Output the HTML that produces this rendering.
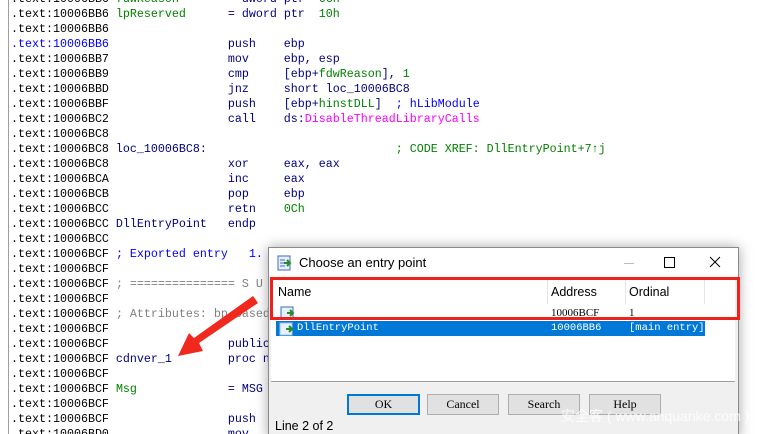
<!DOCTYPE html>
<html><head><meta charset="utf-8"><style>
html,body{margin:0;padding:0;width:775px;height:434px;overflow:hidden;background:#fff;position:relative}
#code{position:absolute;top:0;width:767px;height:434px;border-left:1px solid #a0a0a0;left:8px;overflow:hidden}
.r{position:absolute;left:2px;height:15px;line-height:15px;font-family:"Liberation Mono",monospace;font-size:11.67px;white-space:pre;color:#000080}
.a{color:#000}
.b{color:#0000ff}
.g{color:#008000}
.m{color:#ff00ff}
.gr{color:#808080}
.dlg{position:absolute;left:268px;top:247px;width:469px;height:190px;background:#f0f0f0;border:1px solid #8a8a8a;box-shadow:0 0 12px rgba(0,0,0,.35);font-family:"Liberation Sans","Noto Sans CJK SC",sans-serif}
.title{position:absolute;left:0;top:0;width:469px;height:30px;background:#fff}
.list{position:absolute;left:2px;top:30px;width:464px;height:103px;background:#fff;border-bottom:1px solid #a0a0a0}
.btn{position:absolute;top:146px;width:70px;height:19px;background:#e1e1e1;border:1px solid #adadad;font-family:"Liberation Serif",serif;font-size:12px;text-align:center;line-height:19px}
.sel span{position:absolute;white-space:pre}
</style></head><body>
<div id="code">
<div class="r" style="top:-8px"><span class="a">.text:10006BB6</span> <span class="g">fdwReason</span>       = dword ptr  <span class="g">0Ch</span></div>
<div class="r" style="top:7px"><span class="a">.text:10006BB6</span> <span class="g">lpReserved</span>      = dword ptr  <span class="g">10h</span></div>
<div class="r a" style="top:22px">.text:10006BB6</div>
<div class="r" style="top:37px"><span class="b">.text:10006BB6</span>                 push    ebp</div>
<div class="r" style="top:52px"><span class="a">.text:10006BB7</span>                 mov     ebp, esp</div>
<div class="r" style="top:67px"><span class="a">.text:10006BB9</span>                 cmp     [ebp+<span class="g">fdwReason</span>], <span class="g">1</span></div>
<div class="r" style="top:82px"><span class="a">.text:10006BBD</span>                 jnz     short loc_10006BC8</div>
<div class="r" style="top:97px"><span class="a">.text:10006BBF</span>                 push    [ebp+<span class="g">hinstDLL</span>]  <span class="b">; hLibModule</span></div>
<div class="r" style="top:112px"><span class="a">.text:10006BC2</span>                 call    ds:<span class="m">DisableThreadLibraryCalls</span></div>
<div class="r a" style="top:127px">.text:10006BC8</div>
<div class="r" style="top:142px"><span class="a">.text:10006BC8</span> loc_10006BC8:                           <span class="g">; CODE XREF: DllEntryPoint+7↑j</span></div>
<div class="r" style="top:157px"><span class="a">.text:10006BC8</span>                 xor     eax, eax</div>
<div class="r" style="top:172px"><span class="a">.text:10006BCA</span>                 inc     eax</div>
<div class="r" style="top:187px"><span class="a">.text:10006BCB</span>                 pop     ebp</div>
<div class="r" style="top:202px"><span class="a">.text:10006BCC</span>                 retn    <span class="g">0Ch</span></div>
<div class="r" style="top:217px"><span class="a">.text:10006BCC</span> DllEntryPoint   endp</div>
<div class="r a" style="top:232px">.text:10006BCC</div>
<div class="r" style="top:247px"><span class="a">.text:10006BCF</span> <span class="b">; Exported entry   1. cdnver_1</span></div>
<div class="r a" style="top:262px">.text:10006BCF</div>
<div class="r" style="top:277px"><span class="a">.text:10006BCF</span> <span class="gr">; =============== S U B R O U T I N E</span></div>
<div class="r a" style="top:292px">.text:10006BCF</div>
<div class="r" style="top:307px"><span class="a">.text:10006BCF</span> <span class="gr">; Attributes: bp-based frame</span></div>
<div class="r a" style="top:322px">.text:10006BCF</div>
<div class="r" style="top:337px"><span class="a">.text:10006BCF</span>                 public cdnver_1</div>
<div class="r" style="top:352px"><span class="a">.text:10006BCF</span> cdnver_1        proc near</div>
<div class="r a" style="top:367px">.text:10006BCF</div>
<div class="r" style="top:382px"><span class="a">.text:10006BCF</span> <span class="g">Msg</span>             = MSG ptr -1Ch</div>
<div class="r a" style="top:397px">.text:10006BCF</div>
<div class="r" style="top:412px"><span class="a">.text:10006BCF</span>                 push    ebp</div>
<div class="r" style="top:427px"><span class="a">.text:10006BD0</span>                 mov     ebp, esp</div>
</div>
<svg style="position:absolute;left:0;top:0" width="775" height="434"><polygon points="253,296 258,303 199,343 203,351 178,356 189,333 194,338" fill="#f0281e"/></svg>
<div class="dlg">
 <div class="title">
  <svg style="position:absolute;left:8px;top:7px" width="16" height="16"><rect x="1" y="1" width="12" height="14" fill="#e8f0fb" stroke="#3a6cc0"/><path d="M3 5h5M3 8h5M3 11h5" stroke="#3a6cc0"/><path d="M7 8h5M10 5l3 3-3 3" stroke="#2a8a2a" stroke-width="2" fill="none"/></svg>
  <div style="position:absolute;left:30px;top:7px;font-size:13px">Choose an entry point</div>
  <div style="position:absolute;left:355px;top:15px;width:10px;height:1px;background:#bbb"></div>
  <div style="position:absolute;left:395px;top:9px;width:9px;height:9px;border:1px solid #000"></div>
  <svg style="position:absolute;left:440px;top:8px" width="12" height="12"><path d="M1 1L11 11M11 1L1 11" stroke="#000"/></svg>
 </div>
 <div class="list">
  <div style="position:absolute;left:7px;top:7px;font-size:12.5px">Name</div>
  <div style="position:absolute;left:276px;top:0;width:1px;height:26px;background:#e5e5e5"></div>
  <div style="position:absolute;left:280px;top:7px;font-size:12.5px">Address</div>
  <div style="position:absolute;left:354px;top:0;width:1px;height:26px;background:#e5e5e5"></div>
  <div style="position:absolute;left:358px;top:7px;font-size:12.5px">Ordinal</div>
  <div style="position:absolute;left:433px;top:0;width:1px;height:26px;background:#e5e5e5"></div>
  <svg style="position:absolute;left:9px;top:28px" width="16" height="14"><rect x="1" y="1" width="12" height="12" fill="#e8f0fb" stroke="#3a6cc0"/><path d="M7 7h5M10 4l3 3-3 3" stroke="#2a8a2a" stroke-width="2" fill="none"/></svg>
  <div style="position:absolute;left:280px;top:29px;font-family:'Liberation Serif',serif;font-size:11px">10006BCF</div>
  <div style="position:absolute;left:358px;top:29px;font-family:'Liberation Serif',serif;font-size:11px">1</div>
  <div class="sel" style="position:absolute;left:5px;top:43px;width:429px;height:15px;background:#0078d7;color:#fff;font-family:'Liberation Mono',monospace;font-size:10.5px;line-height:15px">
   <svg style="position:absolute;left:3px;top:1px" width="16" height="14"><rect x="1" y="1" width="12" height="12" fill="#e8f0fb" stroke="#9ec3f0"/><path d="M7 7h5M10 4l3 3-3 3" stroke="#2a8a2a" stroke-width="2" fill="none"/></svg>
   <span style="left:21px">DllEntryPoint</span><span style="left:275px">10006BB6</span><span style="left:353px">[main entry]</span>
  </div>
 </div>
 <div style="position:absolute;left:1px;top:29px;width:464px;height:37px;border:3px solid #f0201a"></div>
 <div class="btn" style="left:78px;border:2px solid #0078d7;width:69px;height:17px;line-height:17px">OK</div>
 <div class="btn" style="left:158px">Cancel</div>
 <div class="btn" style="left:239px">Search</div>
 <div class="btn" style="left:320px">Help</div>
 <div style="position:absolute;left:6px;top:171px;font-size:12.5px">Line 2 of 2</div>
 <div style="position:absolute;left:292px;top:158px;font-size:14px;white-space:nowrap;color:rgba(255,255,255,.85)">安全客 ( www.anquanke.com )</div>
</div>
</body></html>
